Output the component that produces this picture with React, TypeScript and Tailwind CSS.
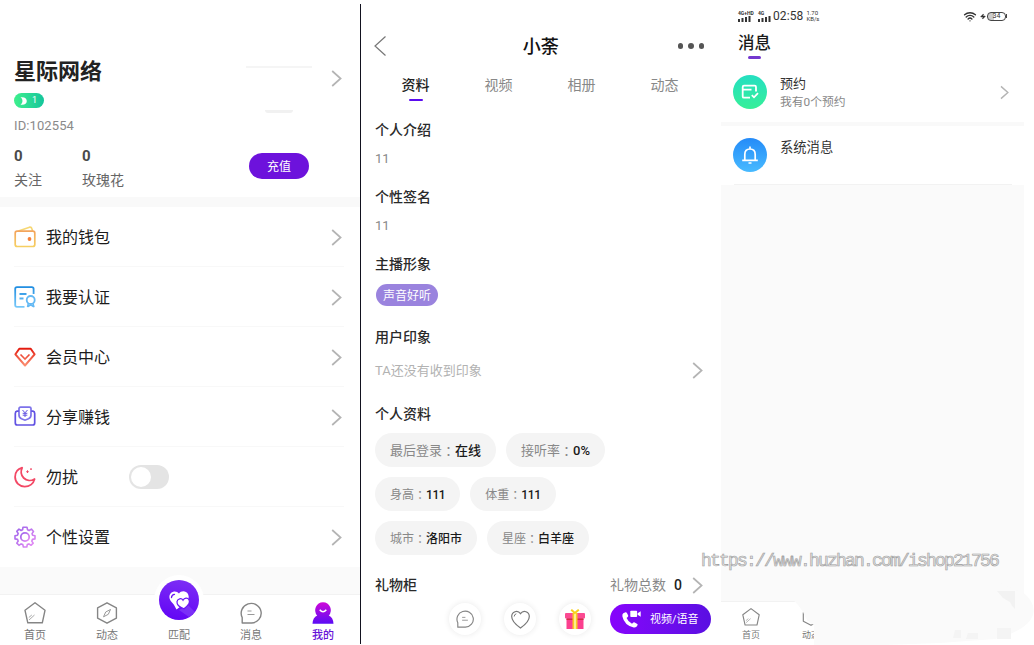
import React from "react"
import { Wifi, Zap } from "lucide-react"

interface IconProps {
  className?: string;
}

function Chevron({ className = "h-[17px] w-[11px]" }: IconProps) {
  return (
    <svg className={`shrink-0 ${className}`} viewBox="0 0 11 17" fill="none" stroke="#b4b4b4" strokeWidth="1.7">
      <path d="M1.2 1 9.6 8.5 1.2 16" />
    </svg>
  )
}

function WalletIcon() {
  return (
    <svg className="h-[22px] w-[22px]" viewBox="0 0 22 22" fill="none" strokeWidth="1.7">
      <path d="M4.500 5 15.500 1.200Q17.300.8 17.800 2.500L18.600 5" stroke="#f6d774" />
      <rect x="1.200" y="5.200" width="19.600" height="15.300" rx="2" stroke="url(#wallet)" />
      <circle cx="15.500" cy="13" r="1.900" fill="#f5803a" />
      <defs>
        <linearGradient id="wallet" x1="0" y1="0" x2="0" y2="1">
          <stop stopColor="#f3a45c" />
          <stop offset="1" stopColor="#f6cf62" />
        </linearGradient>
      </defs>
    </svg>
  )
}

function CertIcon() {
  return (
    <svg className="h-[22px] w-[22px]" viewBox="0 0 22 22" fill="none" stroke="url(#cert)" strokeWidth="1.8">
      <path d="M10.500 20.800H3Q1.200 20.800 1.200 19V3Q1.200 1.200 3 1.200H17.800Q19.600 1.200 19.600 3V8" />
      <path d="M5.500 8H12.500M5.500 12.500H9.500" />
      <circle cx="16.700" cy="14" r="4" stroke="#64b9f4" />
      <path d="M14.300 17.500 13.500 21.200M19 17.500 20 21.200M14 20.500 16.700 18.800 19.400 20.500" stroke="#64b9f4" strokeWidth="1.500" />
      <defs>
        <linearGradient id="cert" gradientUnits="userSpaceOnUse" x1="0" y1="0" x2="0" y2="22">
          <stop stopColor="#1c8be0" />
          <stop offset="1" stopColor="#7ccbfa" />
        </linearGradient>
      </defs>
    </svg>
  )
}

function DiamondIcon() {
  return (
    <svg className="h-[22px] w-[22px]" viewBox="0 0 22 22" fill="none" stroke="url(#vip)" strokeWidth="2">
      <path d="M5.300 2.700H16.700L20.600 8.300 11 19.500 1.400 8.300Z" strokeLinejoin="round" />
      <path d="M6.500 8.500 11 13 15.500 8.500" strokeWidth="1.600" />
      <defs>
        <linearGradient id="vip" gradientUnits="userSpaceOnUse" x1="0" y1="2" x2="0" y2="19">
          <stop stopColor="#e3180c" />
          <stop offset="1" stopColor="#fb8d70" />
        </linearGradient>
      </defs>
    </svg>
  )
}

function ShareIcon() {
  return (
    <svg className="h-[22px] w-[22px]" viewBox="0 0 22 22" fill="none" stroke="#6152e2" strokeWidth="1.700">
      <path d="M5 2.500Q5 1.200 6.500 1.200H15.500Q17 1.200 17 2.500V9Q17 11.500 14.500 12.700L11 14.200 7.500 12.700Q5 11.500 5 9Z" stroke="#7d72ea" />
      <path d="M4.800 5.200H3Q1.300 5.500 1.300 7.500V17Q1.300 19 3.300 19H18.700Q20.700 19 20.700 17V7.500Q20.700 5.500 19 5.200H17.200" />
      <path d="M8.500 4 11 6.800 13.500 4M11 6.800V11M8.700 7.300H13.300M8.700 9.200H13.300" strokeWidth="1" />
    </svg>
  )
}

function MoonIcon() {
  return (
    <svg className="h-[22px] w-[22px]" viewBox="0 0 22 22" fill="none" stroke="#f34865" strokeWidth="1.800">
      <path d="M8.200 1.700C3.500 3 1.100 6.800 1.100 11 1.100 16.500 5.500 20.600 10.700 20.600 15.500 20.600 19.500 17.500 20.600 13 17 15.300 12.500 14.800 9.700 12 7 9.300 6.600 5.200 8.200 1.700Z" strokeLinejoin="round" />
      <path d="M13.500 4.300V7M12.200 5.700H14.800M17 2.300V4M16.200 3.100H17.800" strokeWidth="1" />
    </svg>
  )
}

function GearIcon() {
  return (
    <svg className="h-[22px] w-[22px]" viewBox="0 0 22 22" fill="none" stroke="url(#gear)" strokeWidth="1.600" strokeLinejoin="round">
      <path d="M9 1.200H13L13.500 3.700 15.200 4.500 17.400 3.100 19.500 5.500 18 7.600 18.600 9.300 21 9.700V12.900L18.500 13.400 17.800 15.100 19.200 17.200 17 19.300 14.900 17.900 13.300 18.600 12.800 21H9.400L8.800 18.600 7.100 17.900 5 19.300 2.800 17.100 4.200 15 3.500 13.400 1 12.900V9.700L3.500 9.200 4.200 7.500 2.800 5.400 5 3.100 7.100 4.500 8.600 3.800Z" />
      <circle cx="11" cy="11" r="4.200" strokeWidth="1.800" />
      <defs>
        <linearGradient id="gear" x1="0" y1="0" x2="1" y2="1">
          <stop stopColor="#9a62ea" />
          <stop offset="1" stopColor="#ea8ff5" />
        </linearGradient>
      </defs>
    </svg>
  )
}

function HomeIcon({ className = "h-[22px] w-[22px]" }: IconProps) {
  return (
    <svg className={className} viewBox="0 0 22 22" fill="none" stroke="#858585" strokeWidth="1.400" strokeLinejoin="round">
      <path d="M11 .8 21 8.300 18.300 20.800H3.800L1 8.300Z" />
      <path d="M5 18 10.500 13M4.800 15.500 7.800 13" strokeWidth="1" stroke="#aaa" />
    </svg>
  )
}

function CompassIcon({ className = "h-[22px] w-[22px]" }: IconProps) {
  return (
    <svg className={className} viewBox="0 0 22 22" fill="none" stroke="#858585" strokeWidth="1.400" strokeLinejoin="round">
      <path d="M11 .8 20.400 5.900V16.200L11 21.200 1.600 16.200V5.900Z" />
      <path d="M14.500 7.500 12.300 12.300 7.500 14.800 9.700 10Z" strokeWidth="1" stroke="#999" />
    </svg>
  )
}

function ChatIcon({ className = "h-[22px] w-[22px]" }: IconProps) {
  return (
    <svg className={className} viewBox="0 0 22 22" fill="none" stroke="#858585" strokeWidth="1.400" strokeLinejoin="round">
      <path d="M2.200 21V15.500A10 9.800 0 1 1 11.500 21Z" />
      <path d="M7.500 9H11.500M7.500 12.500H14.500" strokeWidth="1.200" stroke="#999" />
    </svg>
  )
}

function MineIcon() {
  return (
    <svg className="h-[22px] w-[22px]" viewBox="0 0 22 22">
      <path d="M11 .2A8 8 0 0 1 16.800 13.500Q21.200 15.500 21.500 21.700H.5Q.8 15.500 5.200 13.500A8 8 0 0 1 11 .2Z" fill="url(#mine)" />
      <path d="M7.700 7.700Q11 11.700 14.300 7.700" fill="none" stroke="#fff" strokeWidth="1.500" />
      <defs>
        <linearGradient id="mine" x1="0" y1="0" x2="0" y2="1">
          <stop stopColor="#cf08d8" />
          <stop offset="1" stopColor="#5b0cf5" />
        </linearGradient>
      </defs>
    </svg>
  )
}

function MatchIcon() {
  return (
    <svg className="h-10 w-10" viewBox="0 0 40 40">
      <defs>
        <linearGradient id="match" x1="0.500" y1="0" x2="0.300" y2="1">
          <stop stopColor="#7c2cf5" />
          <stop offset="1" stopColor="#6205f5" />
        </linearGradient>
      </defs>
      <circle cx="20" cy="20" r="20" fill="url(#match)" />
      <path d="M29 25 36 32A20 20 0 0 1 30 37L20 30Z" fill="#8a4bf8" opacity=".55" />
      <path d="M20 13.500C22 10.500 27 10.500 29 14 30.500 17 29.500 20 27.500 22L17.500 29.500C16 27 15.500 25 13 22.500 10 19.500 9.500 15.500 12 13 14.500 10.700 18 11 20 13.500Z" fill="#fff" />
      <path d="M12.500 17.500Q12.700 14.600 15.500 14.300" fill="none" stroke="#6a14f5" strokeWidth="1.300" strokeLinecap="round" />
      <path d="M24 20.200C25.300 17.700 28.700 17.500 30 19.700 31.300 22.500 30 24.500 25 28.700 20 27 17.700 25 18 21.700 18.500 18.500 22.500 17.700 24 20.200Z" fill="#fff" stroke="#6a14f5" strokeWidth="1.200" />
    </svg>
  )
}

const menuItems = [
  { label: "我的钱包", icon: <WalletIcon /> },
  { label: "我要认证", icon: <CertIcon /> },
  { label: "会员中心", icon: <DiamondIcon /> },
  { label: "分享赚钱", icon: <ShareIcon /> },
  { label: "勿扰", icon: <MoonIcon />, toggle: true },
  { label: "个性设置", icon: <GearIcon /> },
]

const navItems = [
  { label: "首页", icon: <HomeIcon /> },
  { label: "动态", icon: <CompassIcon /> },
  { label: "匹配", icon: null },
  { label: "消息", icon: <ChatIcon /> },
  { label: "我的", icon: <MineIcon />, active: true },
]

function ProfilePanel() {
  return (
    <section className="flex w-[360px] shrink-0 flex-col">
      <div className="flex h-[197px] justify-between pl-3.5 pr-[18px]">
        <div className="flex flex-col pt-[56px]">
          <h1 className="h-[30px] text-[22px] font-bold leading-[31px] text-[#222]">星际网络</h1>
          <span className="mt-[7px] flex h-[15px] w-[30px] items-center rounded-full bg-linear-to-r from-[#3df08c] to-[#13c59b] pl-[6px] text-[9px] text-white">
            <svg className="mr-[5px] h-[8px] w-[7px]" viewBox="0 0 7 8">
              <path d="M.5.300Q6.500-.5 6.800 4 6.500 8.500.5 7.700 2.500 6.500 2.500 4T.5.300Z" fill="#fff" />
            </svg>
            1
          </span>
          <p className="mt-2 h-5 text-[13px] leading-5 tracking-[0.1px] text-[#8a8a8a]">ID:102554</p>
          <div className="mt-[9px] flex text-sm leading-5 text-[#666]">
            <div className="w-[68px]">
              <p className="text-[15px] font-bold leading-[22px] text-[#4a4a4a]">0</p>
              <p className="mt-[3px]">关注</p>
            </div>
            <div>
              <p className="text-[15px] font-bold leading-[22px] text-[#4a4a4a]">0</p>
              <p className="mt-[3px]">玫瑰花</p>
            </div>
          </div>
        </div>
        <div className="flex">
          <div className="mr-[19px] flex w-[66px] flex-col items-center pt-[66px]">
            <div className="h-0.5 w-full bg-[#f5f5f5]" />
            <div className="mt-[42px] h-[3px] w-7 rounded-b-full bg-[#f1f1f1]" />
            <button className="mt-10 h-[26px] w-[60px] rounded-full bg-[#6d12dc] pt-px text-xs text-white">充值</button>
          </div>
          <Chevron className="mt-[70px] h-[17px] w-[11px]" />
        </div>
      </div>
      <div className="h-2.5 bg-[#f9f9f9]" />
      <ul className="h-[360px]">
        {menuItems.map((item) => (
          <li key={item.label} className="ml-3.5 mr-4 flex h-[60px] items-center border-b border-[#f8f8f8] pr-0.5 pt-px last:border-transparent">
            {item.icon}
            <span className="ml-2.5 pt-px text-base leading-6 text-[#1c1c1c]">{item.label}</span>
            {item.toggle ? (
              <span className="ml-[51px] flex h-6 w-10 items-center rounded-full bg-[#e4e4e4] pl-0.5">
                <span className="h-5 w-5 rounded-full bg-white" />
              </span>
            ) : (
              <Chevron className="ml-auto h-[17px] w-[11px]" />
            )}
          </li>
        ))}
      </ul>
      <div className="h-[27px] bg-[#fafafa]" />
      <nav className="relative flex h-[51px] border-t border-[#f2f2f2] bg-white">
        {navItems.map((item) => (
          <div key={item.label} className="flex w-[72px] shrink-0 flex-col items-center pr-[2px] pt-[7px]">
            <div className="h-[22px]">{item.icon}</div>
            <span className={item.active ? "mt-1 text-[11px] font-medium leading-4 text-[#6612d8]" : "mt-1 text-[11px] leading-4 text-[#777]"}>
              {item.label}
            </span>
          </div>
        ))}
        <div className="absolute -top-[20px] left-[154px] h-[50px] w-[50px] rounded-full bg-white p-[5px]">
          <MatchIcon />
        </div>
      </nav>
    </section>
  )
}

const tabs = ["资料", "视频", "相册", "动态"]

interface ChipProps {
  label: string;
  value: string;
  large?: boolean;
}

function Chip({ label, value, large }: ChipProps) {
  return (
    <div className={`flex h-[34px] items-center rounded-full bg-[#f4f4f4] px-[15px] pt-px ${large ? "text-[13px]" : "text-[12px]"}`}>
      <span className="text-[#888]">{label}</span>
      <span className="font-['Noto_Sans_CJK_TC',sans-serif] text-[#888]">：</span>
      <span className={value === "111" ? "font-medium tracking-[-0.400px] text-[#1a1a1a]" : "font-medium text-[#1a1a1a]"}>{value}</span>
    </div>
  )
}

function Heading({ children, className = "" }: { children: React.ReactNode; className?: string }) {
  return <h3 className={`h-5 text-sm font-medium leading-5 text-[#2a2a2a] ${className}`}>{children}</h3>
}

function RoundButton({ children, className = "" }: { children: React.ReactNode; className?: string }) {
  return (
    <button className={`flex h-8 w-8 items-center justify-center rounded-full bg-white shadow-[0_0_6px_rgba(0,0,0,0.09)] ${className}`}>
      {children}
    </button>
  )
}

function DetailPanel() {
  return (
    <section className="mt-1 flex h-[640px] w-[361px] shrink-0 flex-col border-l border-[#12121f]">
      <header className="flex h-[84px] items-center justify-between pl-[13px] pr-[17px]">
        <svg className="h-[20px] w-[28px]" viewBox="0 0 28 20" fill="none" stroke="#777" strokeWidth="1.200">
          <path d="M11.500.500 1 10 11.500 19.500" />
        </svg>
        <h2 className="pl-[2px] pt-px text-lg font-medium leading-6 text-[#111]">小荼</h2>
        <div className="flex gap-[5px]">
          <i className="h-[5.500px] w-[5.500px] rounded-full bg-[#555]" />
          <i className="h-[5.500px] w-[5.500px] rounded-full bg-[#555]" />
          <i className="h-[5.500px] w-[5.500px] rounded-full bg-[#555]" />
        </div>
      </header>
      <div className="-mt-[13px] flex pl-[13px]">
        {tabs.map((tab, i) => (
          <div key={tab} className="flex h-[27px] w-[83px] flex-col items-center text-sm leading-5">
            <span className={i === 0 ? "font-medium text-[#222]" : "text-[#888]"}>{tab}</span>
            {i === 0 && <span className="mt-[4px] h-0.5 w-3.5 shrink-0 rounded-full bg-[#5a0bef]" />}
          </div>
        ))}
      </div>
      <div className="flex flex-col pl-3.5 pr-[18px]">
        <Heading className="mt-[18px]">个人介绍</Heading>
        <p className="mt-2 h-5 text-[13px] leading-[21px] text-[#888]">11</p>
        <Heading className="mt-[19px]">个性签名</Heading>
        <p className="mt-2 h-5 text-[13px] leading-[21px] text-[#888]">11</p>
        <Heading className="mt-[19px]">主播形象</Heading>
        <span className="ml-px mt-2.5 flex h-[22px] w-[62px] items-center justify-center rounded-full bg-[#9a83de] pt-px text-xs text-white">声音好听</span>
        <Heading className="mt-[21px]">用户印象</Heading>
        <div className="mt-[13px] flex h-5 items-center justify-between text-[13px] text-[#b2b2b2]">
          <span className="pt-px">TA还没有收到印象</span>
          <Chevron />
        </div>
        <Heading className="mt-6">个人资料</Heading>
        <div className="mt-[9px] flex flex-col gap-2.5">
          <div className="flex gap-2.5">
            <Chip label="最后登录" value="在线" large />
            <Chip label="接听率" value="0%" large />
          </div>
          <div className="flex gap-2.5">
            <Chip label="身高" value="111" />
            <Chip label="体重" value="111" />
          </div>
          <div className="flex gap-2.5">
            <Chip label="城市" value="洛阳市" />
            <Chip label="星座" value="白羊座" />
          </div>
        </div>
        <div className="mt-5 flex h-5 items-center">
          <Heading>礼物柜</Heading>
          <span className="ml-auto text-sm text-[#888]">礼物总数</span>
          <span className="ml-2 w-[18px] text-sm font-medium text-[#222]">0</span>
          <Chevron />
        </div>
      </div>
      <div className="mt-2 flex items-center pl-[88px]">
        <RoundButton><ChatIcon className="h-[18px] w-[18px]" /></RoundButton>
        <RoundButton className="ml-[23px]">
          <svg className="h-[19px] w-[19px]" viewBox="0 0 19 19" fill="none" stroke="#777" strokeWidth="1.200">
            <path d="M9.500 18C4.500 14.500.7 10.700.7 6.500.7 1.800 6.500-.5 9.500 3.700 12.500-.5 18.300 1.800 18.300 6.500 18.300 10.700 14.500 14.500 9.500 18Z" />
            <path d="M3.200 6.500Q3.300 4.300 5.300 3.800" strokeWidth="1" />
          </svg>
        </RoundButton>
        <RoundButton className="ml-[23px]">
          <svg className="h-5 w-5" viewBox="0 0 20 20">
            <path d="M1.500 10H18.500V20H1.500Z" fill="#fb3f8f" />
            <path d="M1.500 8.500H18.500V11H1.500Z" fill="#cf2f45" />
            <rect y="4" width="20" height="5.500" rx="1" fill="#fb4a92" />
            <path d="M7.500 4H12.500V20H7.500Z" fill="#fbc926" />
            <path d="M9 4H11V20H9Z" fill="#fdf08a" />
            <path d="M6.200.7 9.900 4 13.800.7" fill="none" stroke="#f7d21c" strokeWidth="2" />
          </svg>
        </RoundButton>
        <button className="ml-[19px] flex h-[30px] w-[101px] items-center rounded-full bg-linear-to-r from-[#8703fc] to-[#5a0ee2] pl-3 text-[11px] text-white">
          <svg className="mr-[9px] h-[19px] w-[19px] shrink-0" viewBox="0 0 19 19" fill="#fff">
            <path d="M1.300 3.300 3.500 2.200Q4.300 2 4.800 2.800L6.200 5.600Q6.400 6.400 5.700 7L4.600 8Q6 11.700 10 13.700L11.300 12.500Q12 12 12.700 12.400L15.300 14Q15.900 14.500 15.500 15.300 14.300 18 11.700 17.500 2.300 15.300.4 6.500 0 4.200 1.300 3.300Z" />
            <rect x="8.300" y=".8" width="6.800" height="6.200" rx=".8" />
            <path d="M15.600 3.200 18.700 1.300V6.700L15.600 4.800Z" />
          </svg>
          <span className="pt-0.5">视频/语音</span>
        </button>
      </div>
    </section>
  )
}

function SignalBars({ label }: { label: string }) {
  return (
    <div className="flex flex-col items-start">
      <span className="h-[5px] text-[5px] font-bold leading-[5px] text-[#333]">{label}</span>
      <svg className="h-[6px] w-[13px]" viewBox="0 0 13 6" fill="#333">
        <path d="M0 3H2V6H0ZM3.500 2H5.500V6H3.500ZM7 1H9V6H7ZM10.500 0H12.500V6H10.500Z" />
      </svg>
    </div>
  )
}

function MessagePanel() {
  return (
    <section className="relative flex w-[303px] shrink-0 flex-col">
      <div className="flex h-8 items-center pl-[17px] pr-[17px] text-[#333]">
        <div className="w-[20px] whitespace-nowrap"><SignalBars label="4G+HD" /></div>
        <div className="w-[15px]"><SignalBars label="4G" /></div>
        <span className="text-[12px] leading-4 tracking-[0.100px]">02:58</span>
        <span className="ml-[3px] text-[6px] leading-[6px]">1.70<br />KB/s</span>
        <Wifi className="ml-auto h-[13px] w-[14px]" strokeWidth={2.6} />
        <Zap className="ml-[3px] h-[7px] w-[6px] fill-[#333]" />
        <span className="ml-px flex h-[9px] w-[19px] items-center justify-center rounded-[4px] border border-[#444] bg-linear-to-r from-[#ccc] from-35% to-white to-35% text-[7px] leading-none">34</span>
        <i className="h-1 w-px bg-[#444]" />
      </div>
      <div className="h-[30px] pl-[17px]">
        <h2 className="h-6 text-[16.500px] font-medium leading-6 text-[#1a1a1a]">消息</h2>
        <div className="ml-2.5 h-[3px] w-[13px] rounded-full bg-[#7438cf]" />
      </div>
      <div className="flex h-[60px] items-center pl-3 pr-[15px]">
        <span className="flex h-[34px] w-[34px] items-center justify-center rounded-full bg-linear-to-b from-[#25dfc1] to-[#36ef98]">
          <svg className="h-[18px] w-[18px]" viewBox="0 0 18 18" fill="none" stroke="#fff" strokeWidth="1.800">
            <path d="M9 14.700H3Q1.700 14.700 1.700 13.400V4Q1.700 2.700 3 2.700H13.700Q15 2.700 15 4V8.500M1.700 6.600H10.500" />
            <path d="M10.800 12.200 13 14.300 17 10.200" />
          </svg>
        </span>
        <div className="ml-[13px] flex flex-col pt-px">
          <span className="h-[18px] text-[13px] leading-[18px] text-[#333]">预约</span>
          <span className="h-[18px] text-[11.800px] leading-[18px] text-[#888]">我有0个预约</span>
        </div>
        <Chevron className="ml-auto h-[15px] w-[9px]" />
      </div>
      <div className="h-1 bg-[#f9f9f9]" />
      <div className="ml-[13px] mr-3 flex h-[59px] items-center border-b border-[#f2f2f2]">
        <span className="-ml-px flex h-[34px] w-[34px] items-center justify-center rounded-full bg-linear-to-b from-[#258bf8] to-[#48baff]">
          <svg className="h-[18px] w-[18px]" viewBox="0 0 18 18" fill="none" stroke="#fff" strokeWidth="1.700">
            <path d="M3.800 14V8.500Q3.800 3 9 3T14.200 8.500V14M1.200 14.400H16.800M9 .5V3M7.500 17H10.500" />
          </svg>
        </span>
        <span className="-mt-[15px] ml-[13px] text-[13.300px] leading-5 text-[#333]">系统消息</span>
      </div>
      <div className="h-[416px] bg-[#fafafa]" />
      <nav className="flex h-[44px] border-t border-[#f2f2f2]">
        <div className="flex w-[60px] flex-col items-center pt-1.5">
          <HomeIcon className="h-[18px] w-[18px]" />
          <span className="mt-[3px] text-[9px] leading-3 text-[#777]">首页</span>
        </div>
        <div className="flex w-[60px] flex-col items-center pt-1.5">
          <CompassIcon className="h-[18px] w-[18px]" />
          <span className="mt-[3px] text-[9px] leading-3 text-[#777]">动态</span>
        </div>
      </nav>
      {/* pale smudge over the rest of the bottom bar */}
      <svg className="absolute left-[69px] top-[580px] h-[65px] w-[244px]" viewBox="0 0 244 65">
        <path d="M3 20 20 10 50 3H210L235 14Q246 24 243 35 238 50 205 59L150 63 94 65H24V45L20 43Q15 38 13 32 8 24 3 20Z" fill="#fafafa" />
        <path d="M207 11H225V29Q222 27 220 22L213 18Z" fill="#f2f2f2" />
        <path d="M165 50H171V58H163ZM178 53H188V59H176ZM207 48H221V59H207Z" fill="#f4f4f4" />
      </svg>
      <p className="absolute left-[-20px] top-[551px] whitespace-nowrap font-['Liberation_Mono',monospace] text-[18px] leading-5 tracking-[-1.800px] text-[#e6e6e6] [-webkit-text-stroke:0.600px_#9c9c9c]">
        https://www.huzhan.com/ishop21756
      </p>
    </section>
  )
}

export default function App() {
  return (
    <main className="flex h-[645px] w-[1034px] overflow-hidden bg-white font-[Roboto,'Noto_Sans_CJK_SC',sans-serif]">
      <ProfilePanel />
      <DetailPanel />
      <MessagePanel />
    </main>
  )
}
